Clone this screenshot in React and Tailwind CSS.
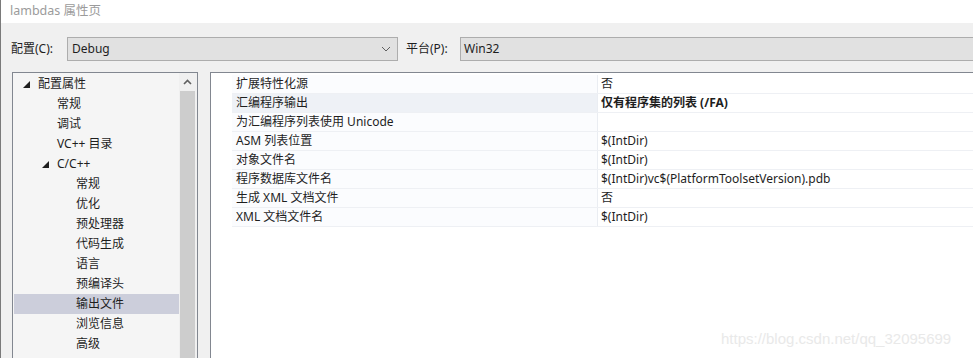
import React from "react";

const tree = [
  { t: "配置属性", lvl: 0, tri: true },
  { t: "常规", lvl: 1 },
  { t: "调试", lvl: 1 },
  { t: "VC++ 目录", lvl: 1 },
  { t: "C/C++", lvl: 1, tri: true },
  { t: "常规", lvl: 2 },
  { t: "优化", lvl: 2 },
  { t: "预处理器", lvl: 2 },
  { t: "代码生成", lvl: 2 },
  { t: "语言", lvl: 2 },
  { t: "预编译头", lvl: 2 },
  { t: "输出文件", lvl: 2, sel: true },
  { t: "浏览信息", lvl: 2 },
  { t: "高级", lvl: 2 },
];

const props = [
  ["扩展特性化源", "否"],
  ["汇编程序输出", "仅有程序集的列表 (/FA)", true],
  ["为汇编程序列表使用 Unicode", ""],
  ["ASM 列表位置", "$(IntDir)"],
  ["对象文件名", "$(IntDir)"],
  ["程序数据库文件名", "$(IntDir)vc$(PlatformToolsetVersion).pdb"],
  ["生成 XML 文档文件", "否"],
  ["XML 文档文件名", "$(IntDir)"],
];

const font = { fontFamily: '"Noto Sans", "Noto Sans CJK SC", sans-serif' };

function Tri() {
  return (
    <svg width="7" height="7" viewBox="0 0 7 7" className="block">
      <polygon points="7,0 7,7 0,7" fill="#1e1e1e" />
    </svg>
  );
}

export default function App() {
  return (
    <div
      className="relative w-[973px] h-[358px] overflow-hidden bg-[#f0f0f0] text-[12px] text-[#1e1e1e] border-l border-[#7a7a7a] leading-none"
      style={font}
    >
      {/* title bar */}
      <div className="h-[23px] bg-white flex items-center pl-[9px] text-[12.5px] text-[#9b9b9b]">
        lambdas 属性页
      </div>

      {/* config row */}
      <div className="h-[49px] flex items-start pt-[14px]">
        <div className="w-[66px] pl-[10px] h-[24px] flex items-center">配置(C):</div>
        <div className="w-[331px] h-[24px] border border-[#adadad] bg-[#e1e1e1] flex items-center pl-[4px] pr-[6px]">
          <span className="flex-1">Debug</span>
          <svg width="10" height="6" viewBox="0 0 10 6">
            <polyline points="1,1 5,5 9,1" fill="none" stroke="#606060" strokeWidth="1" />
          </svg>
        </div>
        <div className="w-[62px] pl-[8px] h-[24px] flex items-center">平台(P):</div>
        <div className="flex-1 h-[24px] border-y border-l border-[#adadad] bg-[#e1e1e1] flex items-center pl-[3px]">
          Win32
        </div>
      </div>

      {/* main */}
      <div className="flex pl-[11px] h-[286px]">
        {/* tree */}
        <div className="w-[186px] border border-[#828790] border-b-0 bg-[#f5f5f5] flex">
          <div className="w-[166px] pt-[1px] pl-[1px]">
            {tree.map((n, i) => (
              <div
                key={i}
                className={
                  "h-[20px] flex items-center " + (n.sel ? "bg-[#cccedb]" : "")
                }
              >
                <div
                  className={
                    n.lvl === 0 ? "w-[9px]" : n.lvl === 1 ? "w-[28px]" : "w-[47px]"
                  }
                />
                <div className="w-[15px] flex items-center">{n.tri ? <Tri /> : null}</div>
                <span>{n.t}</span>
              </div>
            ))}
          </div>
          <div className="w-[18px] bg-[#f0f0f0] flex flex-col">
            <div className="h-[18px] flex items-center justify-center pr-[2px]">
              <svg width="9" height="6" viewBox="0 0 9 6">
                <polyline points="1,5 4.5,1.5 8,5" fill="none" stroke="#606060" strokeWidth="1.6" />
              </svg>
            </div>
            <div className="flex-1 ml-[1px] w-[15px] bg-[#cdcdcd]" />
          </div>
        </div>

        {/* gap */}
        <div className="w-[12px]" />

        {/* properties */}
        <div className="flex-1 border-l border-t border-[#828790] bg-white flex">
          <div className="w-[21px]" />
          <div className="flex-1 pt-[2px]">
            {props.map(([k, v, sel], i) => (
              <div key={i} className="h-[19px] flex border-b border-[#eef0f4]">
                <div
                  className={
                    "w-[366px] pl-[4px] flex items-center border-r border-[#eaedf2] " +
                    (sel ? "bg-[#eef1f6]" : "bg-[#fbfcfe]")
                  }
                >
                  {k}
                </div>
                <div className={"flex-1 pl-[3px] flex items-center " + (sel ? "font-bold" : "")}>
                  {v}
                </div>
              </div>
            ))}
          </div>
        </div>
      </div>

      {/* watermark */}
      <div
        className="absolute left-[720px] top-[331px] text-[15px] text-[#e9e9e9]"
        style={{ fontFamily: '"Liberation Sans", Arial, sans-serif' }}
      >
        https://blog.csdn.net/qq_32095699
      </div>
    </div>
  );
}
